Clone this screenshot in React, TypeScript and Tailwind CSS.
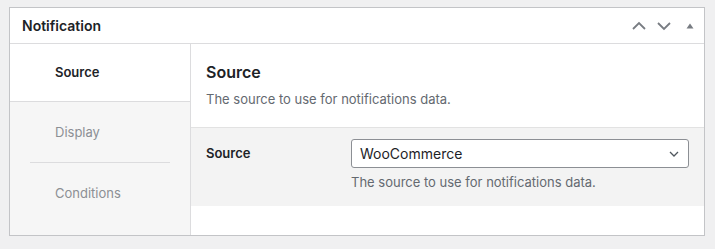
import { useState } from "react";

const tabs = ["Source", "Display", "Conditions"];

function ChevronUp() {
  return (
    <svg className="h-[10px] w-[14px]" viewBox="0 0 14 10" fill="none" stroke="#787c82" strokeWidth="1.8" aria-hidden="true">
      <path d="M1 8l6-6 6 6" />
    </svg>
  );
}

function ChevronDown() {
  return (
    <svg className="h-[10px] w-[14px]" viewBox="0 0 14 10" fill="none" stroke="#787c82" strokeWidth="1.8" aria-hidden="true">
      <path d="M1 2l6 6 6-6" />
    </svg>
  );
}

function Caret() {
  return (
    <svg className="h-[6px] w-[8px]" viewBox="0 0 8 6" fill="#787c82" aria-hidden="true">
      <path d="M0.5 5.5h7L4 0.5z" />
    </svg>
  );
}

export default function App() {
  const [active, setActive] = useState("Source");

  return (
    <div
      className="h-[249px] w-[715px] bg-[#f0f0f1] pl-[9px] pr-[10px] pt-[7px] text-[13px] text-[#1d2327]"
      style={{ fontFamily: "Inter, 'Noto Sans', sans-serif" }}
    >
      <div className="flex h-[229px] flex-col border border-[#c3c4c7] bg-white">
        {/* header */}
        <div className="flex h-[36px] shrink-0 items-center justify-between border-b border-[#dcdcde] pl-[12px] pr-[10px]">
          <h2 className="text-[14px] font-semibold">Notification</h2>
          <div className="flex items-center">
            <ChevronUp />
            <span className="ml-[11px]">
              <ChevronDown />
            </span>
            <span className="ml-[15px] flex">
              <Caret />
            </span>
          </div>
        </div>

        <div className="flex flex-1">
          {/* tabs */}
          <ul className="w-[181px] shrink-0 border-r border-[#dcdcde] bg-[#f6f6f6]">
            {tabs.map((tab, i) => (
              <li key={tab}>
                {i === 2 && <div className="mx-[20px] border-t border-[#dcdcde]" />}
                <button
                  type="button"
                  onClick={() => setActive(tab)}
                  className={
                    tab === active
                      ? "flex h-[58px] w-full items-center border-b border-[#dcdcde] bg-white pl-[45px] font-semibold text-[#1d2327]"
                      : "flex h-[60px] w-full items-center pl-[45px] pt-[1px] text-[#8c8f94]"
                  }
                >
                  {tab}
                </button>
              </li>
            ))}
          </ul>

          {/* content */}
          <div className="flex-1">
            <div className="h-[83px] px-[15px] pt-[18px]">
              <h3 className="text-[16px] font-semibold leading-[20px]">Source</h3>
              <p className="mt-[8px] text-[#646970]">The source to use for notifications data.</p>
            </div>
            <div className="flex h-[79px] border-t border-[#e2e2e2] bg-[#f3f3f3] pl-[15px] pr-[15px] pt-[11px]">
              <div className="w-[145px] pt-[5px] font-semibold">Source</div>
              <div className="flex-1">
                <div className="flex h-[29px] items-center justify-between rounded-[3px] border border-[#8c8f94] bg-white pl-[8px] pr-[8px] text-[14px]">
                  <span>WooCommerce</span>
                  <svg className="h-[12px] w-[12px]" viewBox="0 0 12 12" fill="none" stroke="#50575e" strokeWidth="1.3" aria-hidden="true">
                    <path d="M2 4l4 4 4-4" />
                  </svg>
                </div>
                <p className="mt-[5px] text-[#646970]">The source to use for notifications data.</p>
              </div>
            </div>
          </div>
        </div>
      </div>
    </div>
  );
}
